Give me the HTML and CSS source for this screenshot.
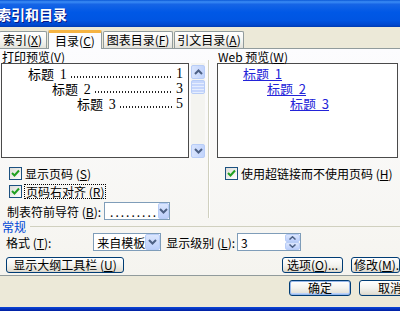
FILE: index.html
```html
<!DOCTYPE html>
<html lang="zh-CN">
<head>
  <meta charset="UTF-8" />
  <title>索引和目录</title>
  <link rel="stylesheet" href="styles.css">
</head>
<body>
  <div class="window">

    <!-- Title bar -->
    <div class="titlebar"><span class="title">索引和目录</span></div>

    <!-- Tabs -->
    <div class="tabs">
      <div class="tab tab-first">索引(<u>X</u>)</div>
      <div class="tab active">目录(<u>C</u>)</div>
      <div class="tab tab-wide">图表目录(<u>F</u>)</div>
      <div class="tab tab-wide">引文目录(<u>A</u>)</div>
    </div>

    <!-- Tab panel -->
    <div class="panel">
      <div class="upper">
        <div class="col-left">
          <div class="label">打印预览(<u>V</u>)</div>
          <div class="preview">
            <div class="list">
              <div class="toc-line lvl1"><span>标题&nbsp; <span class="num">1</span></span><span class="dots"></span><span class="num">1</span></div>
              <div class="toc-line lvl2"><span>标题&nbsp; <span class="num">2</span></span><span class="dots"></span><span class="num">3</span></div>
              <div class="toc-line lvl3"><span>标题&nbsp; <span class="num">3</span></span><span class="dots"></span><span class="num">5</span></div>
            </div>
            <div class="scrollbar">
              <div class="sb-btn">
                <svg width="9" height="6" viewBox="0 0 9 6"><path d="M1 5 L4.5 1.5 L8 5" fill="none" stroke="#4d6185" stroke-width="2"/></svg>
              </div>
              <div class="sb-thumb"></div>
              <div class="sb-track"></div>
              <div class="sb-btn">
                <svg width="9" height="6" viewBox="0 0 9 6"><path d="M1 1 L4.5 4.5 L8 1" fill="none" stroke="#4d6185" stroke-width="2"/></svg>
              </div>
            </div>
          </div>

          <div class="check check-first">
            <span class="box"><svg width="11" height="11" viewBox="0 0 11 11"><path d="M2 5 L4.5 7.5 L9 2.5" fill="none" stroke="#21a121" stroke-width="2"/></svg></span>
            <span>显示页码 (<u>S</u>)</span>
          </div>
          <div class="check">
            <span class="box"><svg width="11" height="11" viewBox="0 0 11 11"><path d="M2 5 L4.5 7.5 L9 2.5" fill="none" stroke="#21a121" stroke-width="2"/></svg></span>
            <span class="focus">页码右对齐 (<u>R</u>)</span>
          </div>

          <div class="field-row leader">
            <span class="field-label">制表符前导符 (<u>B</u>):</span>
            <div class="combo combo-leader">
              <span class="combo-text dots-text">.........</span>
              <span class="drop">
                <svg width="9" height="6" viewBox="0 0 9 6"><path d="M1 1 L4.5 4.5 L8 1" fill="none" stroke="#4d6185" stroke-width="2"/></svg>
              </span>
            </div>
          </div>
        </div>

        <div class="sep"></div>

        <div class="col-right">
          <div class="label">Web 预览(<u>W</u>)</div>
          <div class="web-box">
            <a class="web-link lvl1">标题&nbsp; 1</a>
            <a class="web-link lvl2">标题&nbsp; 2</a>
            <a class="web-link lvl3">标题&nbsp; 3</a>
          </div>
          <div class="check check-first">
            <span class="box"><svg width="11" height="11" viewBox="0 0 11 11"><path d="M2 5 L4.5 7.5 L9 2.5" fill="none" stroke="#21a121" stroke-width="2"/></svg></span>
            <span>使用超链接而不使用页码 (<u>H</u>)</span>
          </div>
        </div>
      </div>

      <div class="group-title"><span>常规</span></div>

      <div class="field-row format">
        <span class="field-label">格式 (<u>T</u>):</span>
        <div class="combo combo-format">
          <span class="combo-text">来自模板</span>
          <span class="drop">
            <svg width="9" height="6" viewBox="0 0 9 6"><path d="M1 1 L4.5 4.5 L8 1" fill="none" stroke="#4d6185" stroke-width="2"/></svg>
          </span>
        </div>
        <span class="field-label level-label">显示级别 (<u>L</u>):</span>
        <div class="spin">
          <span class="combo-text">3</span>
          <span class="spin-btns">
            <span class="spin-btn"><svg width="7" height="4" viewBox="0 0 7 4"><path d="M0.5 3.5 L3.5 0.8 L6.5 3.5" fill="none" stroke="#4d6185" stroke-width="1.5"/></svg></span>
            <span class="spin-btn"><svg width="7" height="4" viewBox="0 0 7 4"><path d="M0.5 0.5 L3.5 3.2 L6.5 0.5" fill="none" stroke="#4d6185" stroke-width="1.5"/></svg></span>
          </span>
        </div>
      </div>

      <div class="btn-row">
        <button class="btn btn-outline">显示大纲工具栏 (<u>U</u>)</button>
        <span class="spacer"></span>
        <button class="btn btn-options">选项(<u>O</u>)...</button>
        <button class="btn btn-modify">修改(<u>M</u>)...</button>
      </div>
    </div>

    <!-- Dialog buttons -->
    <div class="actions">
      <button class="btn btn-dialog btn-default">确定</button>
      <button class="btn btn-dialog">取消</button>
    </div>

    <div class="frame-bottom"></div>
  </div>
</body>
</html>
```

FILE: styles.css
```css
* {
  margin: 0;
  padding: 0;
  box-sizing: border-box;
}

html, body {
  width: 400px;
  height: 311px;
  overflow: hidden;
  background: #ece9d8;
  font-family: "Noto Sans CJK SC", "DejaVu Sans", sans-serif;
  font-size: 12px;
  color: #000;
}

u {
  text-decoration: underline;
  text-underline-offset: 1px;
}

.window {
  width: 400px;
  height: 311px;
  display: flex;
  flex-direction: column;
  overflow: hidden;
}

/* === TITLE BAR === */
.titlebar {
  height: 27px;
  flex-shrink: 0;
  background: linear-gradient(#0a58d6 0%, #3b8cf5 7%, #1665e6 16%, #0058e6 45%, #0055e2 75%, #0048cf 92%, #003bb0 100%);
  display: flex;
  align-items: center;
}

.title {
  margin-left: -3px;
  color: #fff;
  font-weight: bold;
  font-size: 14px;
  text-shadow: 1px 1px #0a1883;
}

/* === TABS === */
.tabs {
  height: 21px;
  flex-shrink: 0;
  display: flex;
  align-items: flex-end;
}

.tab {
  height: 17px;
  width: 54px;
  margin-right: 1px;
  border: 1px solid #919b9c;
  border-bottom: none;
  border-radius: 2px 2px 0 0;
  background: linear-gradient(#ffffff, #f3f3ef 60%, #e3e2da);
  line-height: 15px;
  text-align: center;
  white-space: nowrap;
}

.tab-first {
  width: 48px;
  margin-left: -1px;
  text-align: right;
  padding-right: 4px;
}

.tab-wide {
  width: 70px;
}

.tab.active {
  height: 19px;
  width: 54px;
  margin-bottom: -1px;
  position: relative;
  z-index: 1;
  border-top: 3px solid #f6b443;
  background: #fcfcfe;
  line-height: 16px;
}

/* === PANEL === */
.panel {
  height: 228px;
  flex-shrink: 0;
  border-top: 1px solid #919b9c;
  border-bottom: 1px solid #919b9c;
  background: linear-gradient(#fcfcfe, #f5f4ef);
  display: flex;
  flex-direction: column;
}

.upper {
  height: 171px;
  display: flex;
}

.col-left {
  width: 207px;
  padding-left: 1px;
}

.label {
  margin-top: 1px;
  height: 13px;
  line-height: 13px;
  padding-left: 1px;
  white-space: nowrap;
}

.preview {
  height: 95px;
  display: flex;
}

.list {
  width: 188px;
  border: 1px solid #4a4a4a;
  background: #fff;
  padding-top: 2px;
  font-size: 13px;
}

.toc-line {
  height: 15px;
  line-height: 15px;
  display: flex;
  padding-right: 5px;
  white-space: nowrap;
}

.toc-line.lvl1 { padding-left: 26px; }
.toc-line.lvl2 { padding-left: 50px; }
.toc-line.lvl3 { padding-left: 75px; }

.num {
  font-family: "Liberation Serif", serif;
  font-size: 14px;
}

/* dot leader drawn as a pattern */
.dots {
  flex: 1;
  margin: 0 3px 3px 3px;
  background: radial-gradient(circle, #222 0.7px, transparent 1px) 0 100% / 3px 2px repeat-x;
}

.scrollbar {
  width: 14px;
  margin-left: 2px;
  display: flex;
  flex-direction: column;
  background: #f4f4f0;
  padding-top: 2px;
}

.sb-btn,
.sb-thumb {
  height: 14px;
  border: 1px solid #b8cdf7;
  border-radius: 2px;
  background: linear-gradient(90deg, #d8e4fd, #c2d4fc);
  display: flex;
  align-items: center;
  justify-content: center;
}

.sb-thumb {
  margin-top: 1px;
  background: repeating-linear-gradient(#c6d6fc 0 2px, #e6eefe 2px 3px);
}

.sb-track {
  flex: 1;
}

/* checkboxes */
.check {
  height: 14px;
  margin-top: 4px;
  padding-left: 8px;
  display: flex;
  align-items: center;
  gap: 3px;
  white-space: nowrap;
}

.check-first {
  margin-top: 8px;
}

.box {
  width: 13px;
  height: 13px;
  border: 1px solid #1c5180;
  background: linear-gradient(135deg, #dcdcd7, #fff);
  display: flex;
  align-items: center;
  justify-content: center;
}

.focus {
  outline: 1px dotted #000;
  outline-offset: 0;
  padding: 0 1px;
  line-height: 13px;
}

/* fields */
.field-row {
  height: 18px;
  display: flex;
  align-items: center;
  white-space: nowrap;
}

.leader {
  margin-top: 4px;
}

.field-label {
  padding-left: 6px;
}

.combo,
.spin {
  height: 18px;
  border: 1px solid #7f9db9;
  background: #fff;
  display: flex;
  align-items: center;
}

.combo-text {
  flex: 1;
  padding-left: 3px;
}

.dots-text {
  letter-spacing: 2px;
  padding-left: 5px;
}

.drop {
  width: 15px;
  height: 16px;
  border: 1px solid #b8cdf7;
  border-radius: 2px;
  background: linear-gradient(#dbe6fd, #bccffb);
  display: flex;
  align-items: center;
  justify-content: center;
}

.combo-leader {
  width: 66px;
  margin-left: 3px;
}

.combo-format {
  width: 68px;
  margin-left: 42px;
}

.level-label {
  padding-left: 5px;
}

.spin {
  width: 64px;
  margin-left: 2px;
}

.spin-btns {
  width: 15px;
  height: 16px;
  display: flex;
  flex-direction: column;
}

.spin-btn {
  flex: 1;
  border: 1px solid #b8cdf7;
  border-radius: 2px;
  background: linear-gradient(#dbe6fd, #bccffb);
  display: flex;
  align-items: center;
  justify-content: center;
}

/* separator between previews */
.sep {
  width: 2px;
  height: 158px;
  margin: 11px 7px 0 1px;
  border-left: 1px solid #d0d0bf;
  border-right: 1px solid #fff;
}

.col-right {
  flex: 1;
  padding-right: 2px;
}

.web-box {
  height: 95px;
  border: 1px solid #4a4a4a;
  background: #fff;
  padding-top: 2px;
  font-size: 13px;
}

.web-link {
  display: block;
  height: 15px;
  line-height: 15px;
  color: #2323d8;
  text-decoration: underline;
  width: max-content;
}

.web-link.lvl1 { margin-left: 25px; }
.web-link.lvl2 { margin-left: 49px; }
.web-link.lvl3 { margin-left: 72px; }

.col-right .check {
  padding-left: 8px;
}

/* group title */
.group-title {
  height: 12px;
  display: flex;
  align-items: center;
  gap: 4px;
  padding-left: 2px;
  color: #0046d5;
}

.group-title::after {
  content: "";
  flex: 1;
  height: 1px;
  background: #d0d0bf;
}

.format {
  margin-top: 1px;
}

/* buttons */
.btn {
  height: 16px;
  font-family: inherit;
  font-size: 12px;
  color: #000;
  border: 1px solid #003c74;
  border-radius: 3px;
  background: linear-gradient(#ffffff, #f3f3ef 50%, #e2dfd5 90%, #d6d0c5);
  line-height: 14px;
  white-space: nowrap;
}

.btn-row {
  height: 16px;
  margin-top: 6px;
  display: flex;
  padding-left: 6px;
}

.btn-outline {
  width: 118px;
}

.spacer {
  flex: 1;
}

.btn-options {
  width: 61px;
}

.btn-modify {
  width: 49px;
  margin-left: 8px;
  padding-left: 2px;
  text-align: left;
}

.actions {
  height: 16px;
  margin-top: 4px;
  display: flex;
  gap: 8px;
  padding-left: 289px;
}

.btn-dialog {
  width: 62px;
  flex-shrink: 0;
}

.btn-default {
  box-shadow: inset 0 0 0 1px #98b8ea, inset 0 -1px 0 1px #b9d1fa;
}

.frame-bottom {
  margin-top: auto;
  height: 4px;
  flex-shrink: 0;
  background: linear-gradient(#0a46d8, #001ea0);
}
```
